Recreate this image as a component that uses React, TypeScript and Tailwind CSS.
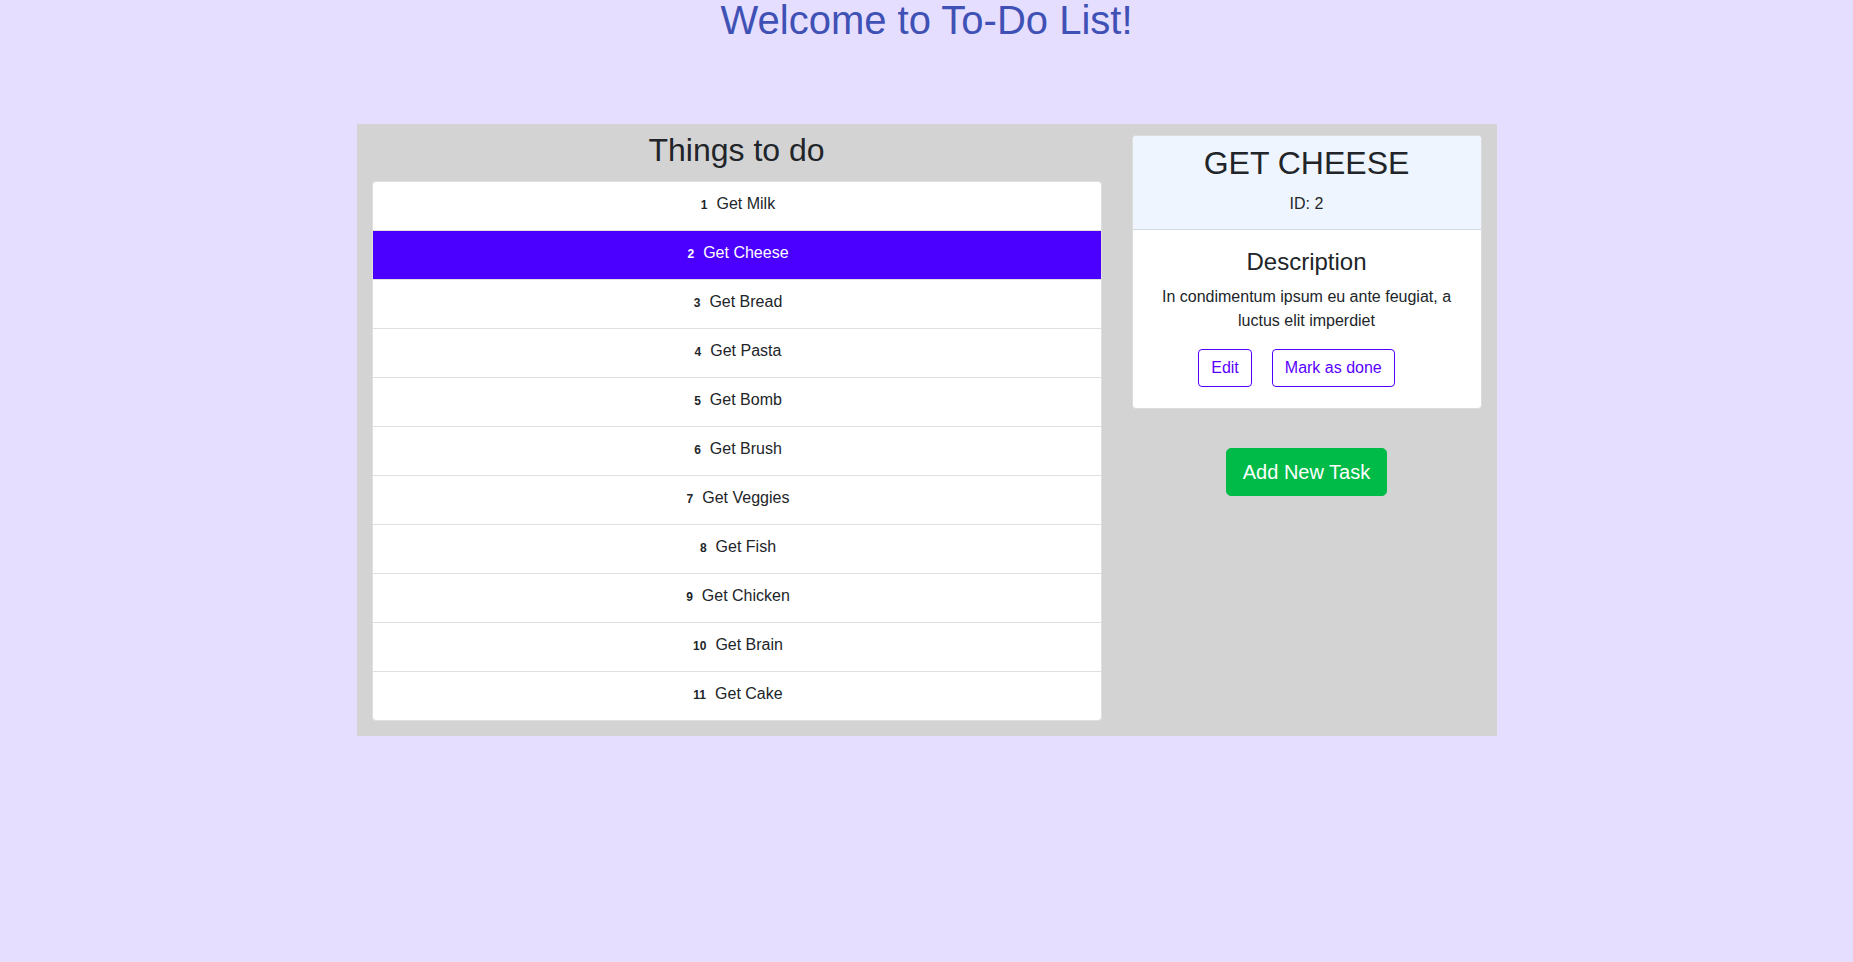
import { useState } from 'react'

interface Task {
  id: number
  title: string
  description: string
}

const tasks: Task[] = [
  { id: 1, title: 'Get Milk', description: 'Lorem ipsum dolor sit amet, consectetur adipiscing elit' },
  { id: 2, title: 'Get Cheese', description: 'In condimentum ipsum eu ante feugiat, a luctus elit imperdiet' },
  { id: 3, title: 'Get Bread', description: 'Sed ut perspiciatis unde omnis iste natus error' },
  { id: 4, title: 'Get Pasta', description: 'Nemo enim ipsam voluptatem quia voluptas sit' },
  { id: 5, title: 'Get Bomb', description: 'Neque porro quisquam est, qui dolorem ipsum' },
  { id: 6, title: 'Get Brush', description: 'Ut enim ad minima veniam, quis nostrum' },
  { id: 7, title: 'Get Veggies', description: 'Quis autem vel eum iure reprehenderit qui in ea' },
  { id: 8, title: 'Get Fish', description: 'At vero eos et accusamus et iusto odio' },
  { id: 9, title: 'Get Chicken', description: 'Nam libero tempore, cum soluta nobis est' },
  { id: 10, title: 'Get Brain', description: 'Temporibus autem quibusdam et aut officiis' },
  { id: 11, title: 'Get Cake', description: 'Itaque earum rerum hic tenetur a sapiente' },
]

function TaskList({ selected, onSelect }: { selected: number; onSelect: (id: number) => void }) {
  return (
    <ul className="bg-white border border-[#dfdfdf] rounded-[4px] overflow-hidden divide-y divide-[#dfdfdf]">
      {tasks.map((t) => {
        const active = t.id === selected
        return (
          <li
            key={t.id}
            onClick={() => onSelect(t.id)}
            className={`pt-[10px] pb-[14px] leading-6 text-base text-center cursor-pointer ${
              active ? 'bg-[#4b00ff] text-white' : 'text-[#212529]'
            }`}
          >
            <b className="text-[12px] leading-none mr-[9px] pl-[3px]">{t.id}</b>
            <span>{t.title}</span>
          </li>
        )
      })}
    </ul>
  )
}

function TaskDetail({ task }: { task: Task }) {
  return (
    <div className="bg-white border border-[#dcdcdc] rounded-[4px] text-center text-[#212529]">
      <div className="bg-[#eef5fe] border-b border-[#d3d9e2] rounded-t-[4px] pt-[8px] pb-[13px]">
        <h2 className="text-[32px] leading-[1.2] mb-[10px]">{task.title.toUpperCase()}</h2>
        <p className="text-base leading-6">ID: {task.id}</p>
      </div>
      <div className="px-5 pt-[18px] pb-[21px]">
        <h4 className="text-2xl leading-[1.2] mb-2">Description</h4>
        <p className="text-base leading-6 mb-[16px]">{task.description}</p>
        <div className="flex justify-center">
          <button className="mr-5 px-3 py-1.5 leading-6 text-base text-[#5a00ff] border border-[#5200ff] rounded-[4px]">
            Edit
          </button>
          <button className="mr-5 px-3 py-1.5 leading-6 text-base text-[#5a00ff] border border-[#5200ff] rounded-[4px]">
            Mark as done
          </button>
        </div>
      </div>
    </div>
  )
}

export default function App() {
  const [selected, setSelected] = useState(2)
  const task = tasks.find((t) => t.id === selected) ?? tasks[0]

  return (
    <div className="min-h-screen bg-[#e6defe] font-['Liberation_Sans',Arial,sans-serif]">
      <h1 className="text-[40px] leading-none text-center text-[#3f51b5]">Welcome to To-Do List!</h1>

      <div className="w-[1140px] mx-auto mt-[84px] bg-[#d3d3d3] px-[15px] pt-[7px] pb-[15px] flex gap-[30px] items-start">
        <div className="w-[730px]">
          <h2 className="text-[32px] leading-[1.2] text-center text-[#212529] mb-3">Things to do</h2>
          <TaskList selected={selected} onSelect={setSelected} />
        </div>

        <div className="w-[350px] pt-[4px] flex flex-col items-center">
          <div className="w-full">
            <TaskDetail task={task} />
          </div>
          <button className="mt-[39px] px-4 py-2 text-xl leading-[30px] text-white bg-[#00bb48] rounded-[5px] border border-[#00bb48]">
            Add New Task
          </button>
        </div>
      </div>
    </div>
  )
}
